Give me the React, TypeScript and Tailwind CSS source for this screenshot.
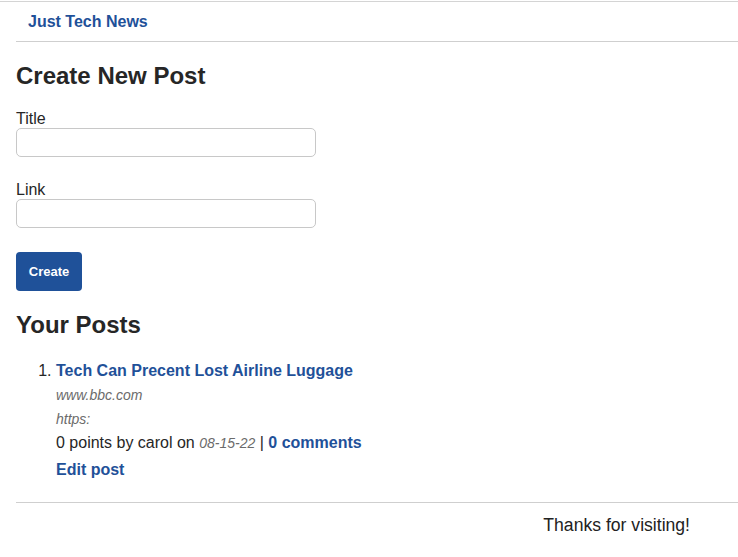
const blue = "text-[#1f5199]";

const App = () => {
  return (
    <div className="min-h-screen bg-white text-[#262626] font-['Liberation_Sans',Arial,sans-serif]">
      <div className="mt-px border-t border-[#d4d4d4]">
        <header className="ml-4 h-[40px] border-b border-[#cfcfcf] flex items-center pl-3">
          <a href="#" className={`${blue} font-bold text-base`}>
            Just Tech News
          </a>
        </header>

        <main className="ml-4">
          <h2 className="mt-[18px] text-2xl leading-8 font-bold">Create New Post</h2>
          <form className="flex flex-col">
            <label className="mt-4 h-5 text-base leading-[22px]">Title</label>
            <input className="w-[300px] h-[29px] border border-[#c8c8c8] rounded-[5px]" />
            <label className="mt-[22px] h-5 text-base leading-[22px]">Link</label>
            <input className="w-[300px] h-[29px] border border-[#c8c8c8] rounded-[5px]" />
            <button
              type="button"
              className="mt-6 w-[66px] h-[39px] rounded-[4px] bg-[#1f5199] text-white text-[13px] font-bold"
            >
              Create
            </button>
          </form>

          <h2 className="mt-[18px] text-2xl leading-8 font-bold">Your Posts</h2>
          <ol className="mt-[18px] pl-10 list-decimal">
            <li className="text-base">
              <div className="leading-6">
                <a href="#" className={`${blue} font-bold`}>
                  Tech Can Precent Lost Airline Luggage
                </a>
              </div>
              <div className="leading-6 italic text-sm text-[#6b6b6b]">www.bbc.com</div>
              <div className="leading-6 italic text-sm text-[#6b6b6b]">https:</div>
              <div className="leading-6">
                0 points by carol on <span className="italic text-sm text-[#6b6b6b]">08-15-22</span>{" "}
                <span className="font-light">|</span>{" "}
                <a href="#" className={`${blue} font-bold`}>
                  0 comments
                </a>
              </div>
              <div className="leading-6 mt-[3px]">
                <a href="#" className={`${blue} font-bold`}>
                  Edit post
                </a>
              </div>
            </li>
          </ol>

          <footer className="mt-[20px] border-t border-[#cfcfcf] flex justify-end pr-[48px] pt-[10px]">
            <span className="leading-6 text-[17.6px] text-[#222]">Thanks for visiting!</span>
          </footer>
        </main>
      </div>
    </div>
  );
};

export default App;
